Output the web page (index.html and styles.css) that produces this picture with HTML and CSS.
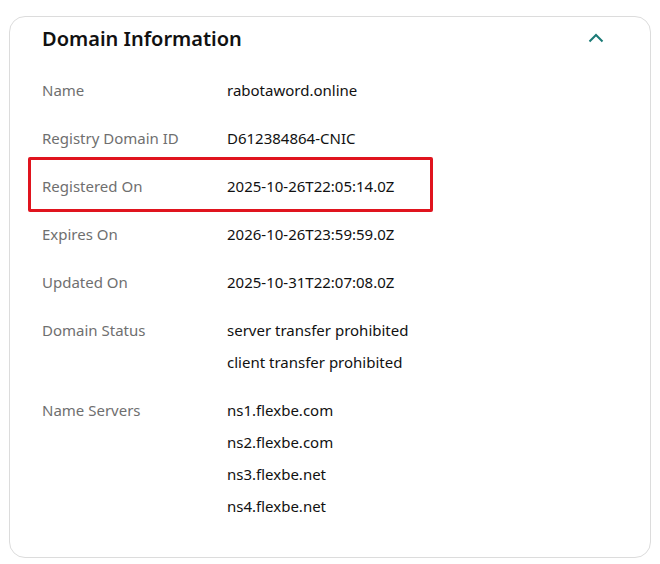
FILE: index.html
```html
<!DOCTYPE html>
<html lang="en">
<head>
  <meta charset="UTF-8">
  <meta name="viewport" content="width=device-width, initial-scale=1.0">
  <title>Domain Information</title>
  <link rel="stylesheet" href="styles.css">
</head>
<body>
  <div class="card">
    <div class="card-header">
      <h2>Domain Information</h2>
      <svg class="chevron" width="16" height="10" viewBox="0 0 16 10">
        <path d="M1.5 8.5 L8 2 L14.5 8.5" fill="none" stroke="#1b7a76" stroke-width="2"/>
      </svg>
    </div>

    <!-- Info rows -->
    <dl class="info-list">
      <div class="info-row">
        <dt>Name</dt>
        <dd><span>rabotaword.online</span></dd>
      </div>
      <div class="info-row">
        <dt>Registry Domain ID</dt>
        <dd><span>D612384864-CNIC</span></dd>
      </div>
      <div class="info-row highlighted">
        <dt>Registered On</dt>
        <dd><span>2025-10-26T22:05:14.0Z</span></dd>
      </div>
      <div class="info-row">
        <dt>Expires On</dt>
        <dd><span>2026-10-26T23:59:59.0Z</span></dd>
      </div>
      <div class="info-row">
        <dt>Updated On</dt>
        <dd><span>2025-10-31T22:07:08.0Z</span></dd>
      </div>
      <div class="info-row">
        <dt>Domain Status</dt>
        <dd>
          <span>server transfer prohibited</span>
          <span>client transfer prohibited</span>
        </dd>
      </div>
      <div class="info-row">
        <dt>Name Servers</dt>
        <dd>
          <span>ns1.flexbe.com</span>
          <span>ns2.flexbe.com</span>
          <span>ns3.flexbe.net</span>
          <span>ns4.flexbe.net</span>
        </dd>
      </div>
    </dl>
  </div>
</body>
</html>
```

FILE: styles.css
```css
/* General Styles */
body {
  font-family: "Noto Sans", Arial, sans-serif;
  background-color: #ffffff;
  margin: 0;
  padding: 16px 9px 7px 9px;
}

.card {
  border: 1px solid #dcdcdc;
  border-radius: 16px;
  padding: 0 32px 35px 32px;
}

.card-header {
  display: flex;
  align-items: center;
  justify-content: space-between;
  height: 42px;
}

.card-header h2 {
  margin: 0;
  font-size: 20px;
  font-weight: 600;
  color: #111111;
}

.chevron {
  margin-right: 14px;
}

/* Info list */
.info-list {
  margin: 15px 0 0 0;
  display: flex;
  flex-direction: column;
  gap: 16px;
}

.info-row {
  display: flex;
  position: relative;
}

.info-row dt {
  width: 185px;
  line-height: 32px;
  font-size: 15px;
  color: #6f6f6f;
}

.info-row dd {
  margin: 0;
  display: flex;
  flex-direction: column;
}

.info-row dd span {
  line-height: 32px;
  font-size: 15px;
  color: #111111;
}

/* Annotation box */
.highlighted::after {
  content: "";
  position: absolute;
  left: -14px;
  top: -13px;
  width: 399px;
  height: 49px;
  border: 3px solid #e0141e;
  border-radius: 2px;
}
```
